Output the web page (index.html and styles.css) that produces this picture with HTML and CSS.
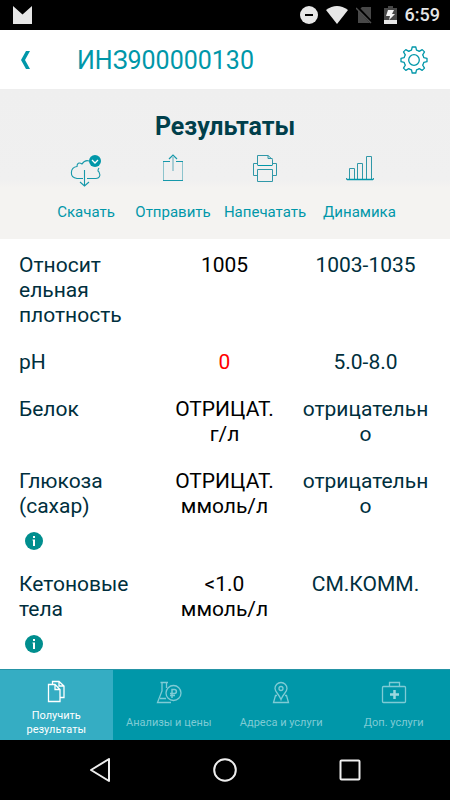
FILE: index.html
```html
<!DOCTYPE html>
<html lang="ru">
<head>
<meta charset="utf-8">
<meta name="viewport" content="width=device-width, initial-scale=1">
<title>Результаты</title>
<link rel="stylesheet" href="styles.css">
</head>
<body>
<div class="status">
  <svg width="20" height="18" viewBox="0 0 20 18"><path d="M1 0L10.500 8.500L20 0V18H1Z" fill="#e6e6e6"/></svg>
  <div class="status-icons">
    <svg width="18" height="18" viewBox="0 0 18 18"><circle cx="9" cy="9" r="9" fill="#e6e6e6"/><path d="M5 9H13" stroke="#000" stroke-width="2"/></svg>
    <svg class="wifi" width="22" height="18" viewBox="0 0 22 18"><path d="M0 4Q11-4 22 4L11 18Z" fill="#e6e6e6"/></svg>
    <svg class="sim" width="17" height="18" viewBox="0 0 17 18"><path d="M6 1H15V17H2V5Z" fill="#484848"/><path d="M1 1L16 17" stroke="#000" stroke-width="3"/><path d="M0 2L15 17" stroke="#505050" stroke-width="1.500"/></svg>
    <svg class="battery" width="13" height="18" viewBox="0 0 13 18"><path d="M0 2H4V0H9V2H13V14H0Z" fill="#484848"/><path d="M0 14H13V18H0Z" fill="#e6e6e6"/><path d="M4 4H10L8 8H11L5 14L6 10H2Z" fill="#f5f5f5"/></svg>
    <span class="clock">6:59</span>
  </div>
</div>
<header class="header">
  <button class="icon-button back" aria-label="Назад"><svg width="9" height="18" viewBox="0 0 9 18"><path d="M5 0H9L4 9L9 18H5L0 9Z" fill="#0097a9"/></svg></button>
  <h1 class="order">ИНЗ900000130</h1>
  <button class="icon-button" aria-label="Настройки"><svg width="28" height="28" viewBox="0 0 28 28" fill="none" stroke="#0097a9" stroke-width="1.300" stroke-linejoin="round"><circle cx="14" cy="14" r="5.300"/><path d="M12.200 1H15.800L16.500 4.200Q18 4.600 19.200 5.400L22.200 3.600L24.500 5.900L22.700 8.900Q23.500 10.200 23.800 11.600L27 12.300V15.700L23.800 16.400Q23.500 17.800 22.700 19.100L24.500 22.100L22.200 24.400L19.200 22.600Q18 23.400 16.500 23.800L15.800 27H12.200L11.500 23.800Q10 23.400 8.800 22.600L5.800 24.400L3.500 22.100L5.300 19.100Q4.500 17.800 4.200 16.400L1 15.700V12.300L4.200 11.600Q4.500 10.200 5.300 8.900L3.500 5.900L5.800 3.600L8.800 5.400Q10 4.600 11.500 4.200Z"/></svg></button>
</header>
<section class="summary">
  <h2 class="title">Результаты</h2>
  <div class="actions">
    <button class="action">
      <svg width="32" height="34" viewBox="0 0 32 34" fill="none" stroke="#1698aa" stroke-width="1.100"><path d="M13 24.500H7C-1 23.500 0 13.500 7 12.500C7 9 9 8 12 10C14 7 16 6 19 7M29 14Q27 17 29 18C31 22 29 24.500 26 24.500H17"/><path d="M14.500 16V32M10 28L14.500 32L19 28"/><circle cx="25" cy="7" r="6" fill="#0097a9" stroke="none"/><path d="M22 6L25 9L28 6" stroke="#fff" stroke-width="1.300"/></svg>
      <span>Скачать</span>
    </button>
    <button class="action">
      <svg width="32" height="34" viewBox="0 0 32 34" fill="none"><path d="M16 3V17" stroke="#a8cdd5" stroke-width="2"/><path d="M6.500 7V27M25.500 7V27" stroke="#8cc3cc" stroke-width="1"/><path d="M6 7.500H13M19 7.500H26M6 26.500H26M12 5L16 1L20 5" stroke="#1698aa" stroke-width="1.200"/></svg>
      <span>Отправить</span>
    </button>
    <button class="action">
      <svg width="32" height="34" viewBox="0 0 32 34" fill="none" stroke="#3098a8" stroke-width="1"><path d="M8.500 11.500V1.500H19L23.500 5.500V11.500M19 1.500V4.500H23.500M9 9.500H4.500V21.500H8.500M23 9.500H27.500V21.500H23.500M8.500 15.500H23.500V27.500H8.500Z"/><path d="M9 11.500H23" stroke="#0097a9" stroke-width="1"/></svg>
      <span>Напечатать</span>
    </button>
    <button class="action">
      <svg width="32" height="34" viewBox="0 0 32 34" fill="none" stroke="#3098a8" stroke-width="1"><path d="M5.500 25V14.500H10.500V25M13.500 25V9.500H18.500V25M22.500 25V2.500H27.500V25M2.500 24V25.500H29.500V24"/><path d="M3 25.500H29" stroke="#0097a9" stroke-width="1.500"/></svg>
      <span>Динамика</span>
    </button>
  </div>
</section>
<main class="results">
  <table class="table">
    <colgroup><col class="name-col"><col><col></colgroup>
    <tbody>
      <tr><td class="name">Относит<br>ельная<br>плотность</td><td>1005</td><td class="norm">1003-1035</td></tr>
      <tr><td class="name">pH</td><td class="alert">0</td><td class="norm">5.0-8.0</td></tr>
      <tr><td class="name">Белок</td><td>ОТРИЦАТ.<br>г/л</td><td class="norm">отрицательн<br>о</td></tr>
      <tr><td class="name">Глюкоза<br>(сахар)<button class="info" aria-label="Подробнее"><svg width="18" height="18" viewBox="0 0 18 18"><circle cx="9" cy="9" r="9" fill="#008e8e"/><path d="M8 4H10V6H8ZM7.500 7.500H10V14H8V8.500H7.500Z" fill="#fff"/></svg></button></td><td>ОТРИЦАТ.<br>ммоль/л</td><td class="norm">отрицательн<br>о</td></tr>
      <tr><td class="name">Кетоновые<br>тела<button class="info" aria-label="Подробнее"><svg width="18" height="18" viewBox="0 0 18 18"><circle cx="9" cy="9" r="9" fill="#008e8e"/><path d="M8 4H10V6H8ZM7.500 7.500H10V14H8V8.500H7.500Z" fill="#fff"/></svg></button></td><td>&lt;1.0<br>ммоль/л</td><td class="norm">СМ.КОММ.</td></tr>
    </tbody>
  </table>
</main>
<nav class="tabs">
  <a class="tab active" href="#results">
    <svg width="26" height="24" viewBox="0 0 26 24" fill="none" stroke="#fff" stroke-width="1.300"><path d="M5.500 5.500H12L17 10.500V22.500H5.500ZM12 5.500V10.500H17M9.500 5V2.500H16L21 7V18.500H17M16 2.500V7H21"/></svg>
    <span>Получить<br>результаты</span>
  </a>
  <a class="tab" href="#prices">
    <svg width="26" height="24" viewBox="0 0 26 24" fill="none" stroke="#7fcbd5" stroke-width="1.300"><path d="M4.500 1.500H12M6 1.500V10L1.500 21.500H15M10.500 1.500V7M4 17.500H10"/><circle cx="17.500" cy="12" r="7.500"/><path d="M16 17V8.500H18.500C21 8.500 21 12.500 18.500 12.500H14M14 14.500H19" stroke-width="1.500"/></svg>
    <span>Анализы и цены</span>
  </a>
  <a class="tab" href="#addresses">
    <svg width="26" height="24" viewBox="0 0 26 24" fill="none" stroke="#7fcbd5" stroke-width="1.300"><path d="M13 18.500C11 13 7 11 7 7.500A6 6 0 0 1 19 7.500C19 11 15 13 13 18.500ZM9 14.500H7.500L5.500 21.500H20.500L18.500 14.500H17"/><circle cx="13" cy="7.500" r="2"/></svg>
    <span>Адреса и услуги</span>
  </a>
  <a class="tab" href="#services">
    <svg width="26" height="24" viewBox="0 0 26 24" fill="none" stroke="#7fcbd5" stroke-width="1.300"><rect x="1.500" y="5.500" width="23" height="16" rx="1"/><path d="M8.500 5V1.500H18.500V5"/><path d="M13.500 9V18M9 13.500H18" stroke="#9cd7df" stroke-width="2.500"/></svg>
    <span>Доп. услуги</span>
  </a>
</nav>
<div class="system">
  <button class="icon-button" aria-label="Назад"><svg width="24" height="24" viewBox="0 0 24 24" fill="none" stroke="#eee" stroke-width="2" stroke-linejoin="round"><path d="M21 1V23L3 12Z"/></svg></button>
  <button class="icon-button" aria-label="Домой"><svg width="24" height="24" viewBox="0 0 24 24" fill="none" stroke="#eee" stroke-width="2"><circle cx="12" cy="12" r="10.800"/></svg></button>
  <button class="icon-button" aria-label="Обзор"><svg width="24" height="24" viewBox="0 0 24 24" fill="none" stroke="#eee" stroke-width="2"><rect x="2.500" y="2.500" width="19" height="19" rx="1"/></svg></button>
</div>
</body>
</html>
```
FILE: styles.css
```css
* { box-sizing: border-box; }
body {
  margin: 0;
  min-height: 100vh;
  display: flex;
  flex-direction: column;
  background: #fff;
  font-family: Roboto, sans-serif;
  color: #002f3d;
}
button {
  padding: 0;
  border: 0;
  background: none;
  font: inherit;
  color: inherit;
}
svg { display: block; flex: none; }
.status {
  display: flex;
  align-items: center;
  justify-content: space-between;
  height: 30px;
  padding: 0 10px 0 12px;
  background: #000;
}
.status-icons { display: flex; align-items: center; }
.wifi { margin-left: 8px; }
.sim { margin-left: 8px; }
.battery { margin-left: 11px; }
.clock {
  margin-left: 8px;
  font-size: 18px;
  font-weight: 500;
  line-height: 20px;
  color: #e6e6e6;
}
.header {
  display: flex;
  align-items: center;
  height: 60px;
  padding: 0 22px 0 21px;
  border-bottom: 1px solid #eee;
}
.icon-button { display: grid; place-items: center; }
.back { width: 9px; }
.order {
  flex: 1;
  margin: 0;
  padding: 2px 0 0 47px;
  font-size: 25px;
  font-weight: 400;
  line-height: 30px;
  color: #0097a9;
}
.summary {
  padding: 22px 0 17px;
  background: linear-gradient(#efefef 0, #f0f0f0 90px, #f4f3f1 98px);
}
.title {
  margin: 0 0 12px;
  font-size: 25px;
  font-weight: 700;
  line-height: 30px;
  text-align: center;
  color: #003f4b;
}
.actions {
  display: grid;
  grid-template-columns: 88fr 86fr 98fr 91fr;
  padding: 0 45px 0 42px;
}
.action {
  display: flex;
  flex-direction: column;
  align-items: center;
  gap: 14px;
  font-size: 15px;
  line-height: 20px;
  color: #0097a9;
}
.results { flex: 1; padding: 3px 14px 0 19px; }
.table {
  width: 100%;
  table-layout: fixed;
  border-collapse: collapse;
  font-size: 21px;
  line-height: 25px;
  text-align: center;
  color: #000;
}
.name-col { width: 135px; }
.table td { padding: 11px 0; vertical-align: top; }
.table .name { text-align: left; color: #002f3d; }
.table .norm { color: #002f3d; }
.table .alert { color: #f00; }
.info { display: block; margin: 13px 0 0 6px; }
.tabs {
  display: grid;
  grid-template-columns: repeat(4, 1fr);
  height: 71px;
  border-top: 1px solid #2594a6;
  background: #0097a9;
}
.tab {
  display: flex;
  flex-direction: column;
  align-items: center;
  gap: 11px;
  padding-top: 11px;
  font-size: 11px;
  line-height: 14px;
  text-align: center;
  text-decoration: none;
  color: #7fcbd5;
}
.tab.active {
  gap: 6px;
  padding-top: 9px;
  background: #35adc3;
  color: #fff;
}
.system {
  display: flex;
  align-items: center;
  justify-content: center;
  gap: 101px;
  height: 60px;
  background: #000;
}
```
